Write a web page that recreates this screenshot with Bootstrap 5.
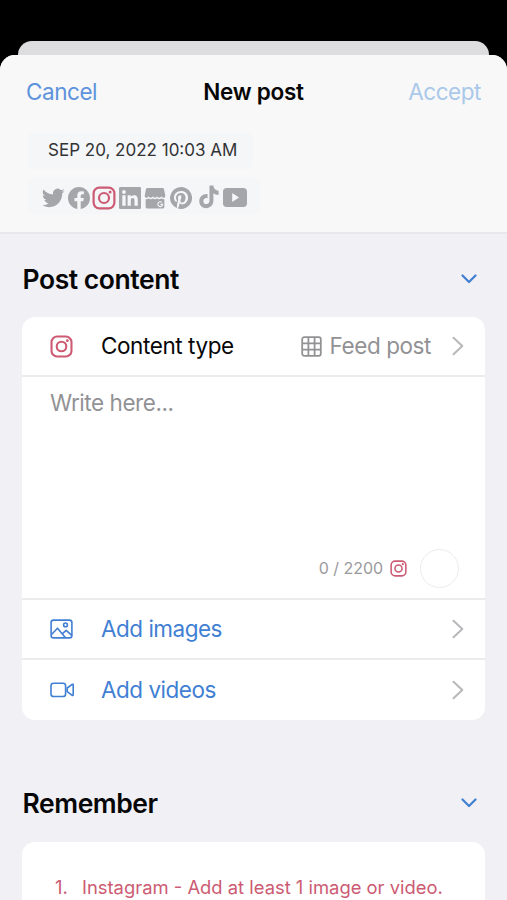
<!DOCTYPE html>
<html lang="en">
<head>
<meta charset="utf-8">
<meta name="viewport" content="width=device-width, initial-scale=1">
<title>New post</title>
<link rel="stylesheet" href="https://cdn.jsdelivr.net/npm/bootstrap@5.3.0/dist/css/bootstrap.min.css">
<style>
  body { font-family: Inter, "Liberation Sans", sans-serif; background: #000; height: 900px; color: #070708; }
  svg { display: block; flex: none; }
  .sheet-back { height: 14px; margin: 41px 18px 0; background: #dddde0; border-radius: 14px 14px 0 0; }
  .sheet { height: 845px; background: #f0f0f5; border-radius: 15px 15px 0 0; }
  .sheet-head { height: 179px; background: #f8f8f8; border-bottom: 2px solid #e8e8eb; }
  .bar { height: 74px; padding: 0 26px; display: grid; grid-template-columns: 1fr auto 1fr; }
  .bar-btn { font-size: 22.5px; line-height: 26px; letter-spacing: -.45px; color: #5d93dc; }
  .bar-btn.dim { color: #a9c8ea; }
  .bar-title { font-size: 22.5px; line-height: 26px; font-weight: 600; letter-spacing: -.25px; }
  .pill { background: #f5f6f8; border-radius: 5px; margin-left: 28px; width: max-content; }
  .date-pill { height: 36px; padding: 0 16px 0 20px; font-size: 17px; letter-spacing: 0; color: #333336; }
  .net-pill { height: 37px; padding: 0 13px; gap: 2.6px; color: #a5a6aa; }
  .tiktok { margin: -1px 1.5px 0 4px; }
  .pink { color: #cc5b73; }
  .sec-head { padding: 0 30px 0 22.5px; height: 34px; }
  .sec-head h2 { font-size: 26.5px; line-height: 34px; font-weight: 600; letter-spacing: -.45px; }
  .panel { margin: 0 22px; background: #fff; border-radius: 13px; overflow: hidden; }
  .post-panel { margin-top: 25px; }
  .rule { border-bottom: 2px solid #ebebee; }
  .line-item { height: 60.5px; padding: 0 21px 0 27.500px; font-size: 22.5px; letter-spacing: -.5px; }
  .line-item > .lead-icon { width: 51.500px; }
  .first-item { height: 60px; letter-spacing: -.42px; }
  .last-item { height: 60px; padding-bottom: 1px; }
  .blue { color: #417fd3; }
  .muted { color: #929295; }
  .chev { color: #b9b9bc; }
  .value-chev { margin-left: 21px; }
  .editor { height: 222.500px; padding: 9px 26px 10px 28px; font-size: 22.5px; letter-spacing: -.45px; }
  .count { font-size: 16px; letter-spacing: -.05px; color: #9a9a9d; }
  .count-icon { margin-left: 7px; }
  .ring { width: 39px; height: 39px; border: 1.5px solid #ececec; border-radius: 50%; margin-left: 13px; }
  .remember { margin-top: 66px; }
  .remember .panel { margin-top: 22px; }
  .note { padding: 33px 0 0 33px; height: 80px; font-size: 18.4px; line-height: 24px; }
  .note .num { width: 27px; }
</style>
<script src="https://cdn.jsdelivr.net/npm/bootstrap@5.3.0/dist/js/bootstrap.bundle.min.js"></script>
</head>
<body class="overflow-hidden m-0">
<svg width="0" height="0" class="position-absolute" aria-hidden="true">
  <symbol id="insta" viewBox="0 0 24 24"><rect x="1.600" y="1.600" width="20.800" height="20.800" rx="5.800" fill="none" stroke="currentColor" stroke-width="2.200"/><circle cx="12" cy="12" r="5" fill="none" stroke="currentColor" stroke-width="2.200"/><circle cx="18.100" cy="5.900" r="1.500" fill="currentColor"/></symbol>
  <symbol id="right" viewBox="0 0 12 20"><path d="M1.500 1.800 10.300 10l-8.800 8.200" fill="none" stroke="currentColor" stroke-width="2.100" stroke-linecap="round" stroke-linejoin="round"/></symbol>
  <symbol id="down" viewBox="0 0 16 10"><path d="M1.500 1.500 8 8l6.500-6.500" fill="none" stroke="currentColor" stroke-width="2.200" stroke-linecap="round" stroke-linejoin="round"/></symbol>
</svg>
<div class="d-flex flex-column">
<div class="sheet-back"></div>
<main class="sheet overflow-hidden">
  <header class="sheet-head">
    <div class="bar align-items-center">
      <span class="bar-btn">Cancel</span>
      <span class="bar-title">New post</span>
      <span class="bar-btn dim text-end">Accept</span>
    </div>
    <div class="pill date-pill d-flex align-items-center mt-1">SEP 20, 2022 10:03 AM</div>
    <div class="pill net-pill d-flex align-items-center mt-2 pt-1">
      <svg width="24" height="24" viewBox="0 0 24 24" fill="currentColor"><path d="M23.600 4.900c-.8.400-1.700.7-2.600.8.900-.6 1.700-1.500 2-2.600-.9.500-1.900.9-2.900 1.100a4.700 4.700 0 0 0-8 4.300C8.200 8.300 4.800 6.500 2.500 3.600a4.700 4.700 0 0 0 1.400 6.200c-.8 0-1.500-.2-2.100-.6 0 2.300 1.600 4.200 3.700 4.700-.7.200-1.400.2-2.100.1.600 1.800 2.300 3.200 4.300 3.200A9.400 9.400 0 0 1 .8 19.100 13.200 13.200 0 0 0 8 21.200c8.700 0 13.500-7.300 13.200-13.900 1-.6 1.800-1.500 2.400-2.400z"/></svg>
      <svg width="22" height="22" viewBox="0 0 24 24" fill="currentColor"><path d="M24 12.070C24 5.400 18.630 0 12 0S0 5.400 0 12.070C0 18.100 4.390 23.090 10.130 24v-8.440H7.080v-3.490h3.050V9.410c0-3.020 1.790-4.690 4.530-4.690 1.310 0 2.680.24 2.680.24v2.970h-1.510c-1.490 0-1.960.93-1.960 1.890v2.250h3.330l-.53 3.490h-2.800V24C19.610 23.090 24 18.100 24 12.070z"/></svg>
      <svg class="pink" width="24" height="24"><use href="#insta"/></svg>
      <svg width="22" height="22" viewBox="0 0 24 24" fill="currentColor"><path fill-rule="evenodd" d="M1.500 0h21A1.500 1.500 0 0 1 24 1.500v21a1.500 1.500 0 0 1-1.500 1.500h-21A1.500 1.500 0 0 1 0 22.500v-21A1.500 1.500 0 0 1 1.500 0zm2.100 9.100v11.400h3.600V9.100zM5.400 3.400a2.050 2.050 0 1 0 0 4.100 2.050 2.050 0 0 0 0-4.100zM9.400 9.100v11.400h3.500v-5.600c0-1.500.3-2.900 2.100-2.900s1.900 1.700 1.900 3v5.500h3.600v-6.200c0-3.100-.7-5.400-4.300-5.400-1.700 0-2.900.9-3.300 1.800V9.100z"/></svg>
      <svg width="24" height="22" viewBox="0 0 24 23" fill="currentColor"><path d="M4 1h16a1.500 1.500 0 0 1 1.400 1.100l1.400 7c0 1.300-.9 2.200-2 2.200s-2-.8-2.200-1.800c-.2 1-1.100 1.800-2.200 1.800S14.300 10.500 14 9.500c-.2 1-1 1.800-2 1.800s-1.900-.8-2.100-1.800c-.3 1-1.200 1.800-2.300 1.800S5.600 10.500 5.400 9.500c-.2 1-1.100 1.800-2.200 1.800-1.100 0-2-.9-2-2.200l1.400-7A1.500 1.500 0 0 1 4 1z"/><path d="M2.200 12.700c1.300.2 2.400-.2 3.200-.9 1.200 1.200 3.200 1.200 4.500 0 1.200 1.200 3 1.200 4.200 0 1.300 1.200 3.300 1.200 4.500 0 .8.700 1.900 1.100 3.200.9V21a1.400 1.400 0 0 1-1.400 1.400H3.600A1.400 1.400 0 0 1 2.200 21z"/><path d="M19.200 16.100a2.500 2.500 0 1 0 .8 2.100h-2.300" fill="none" stroke="#f5f6f8" stroke-width="1.200"/></svg>
      <svg width="22" height="22" viewBox="0 0 24 24" fill="currentColor"><path d="M12 0a12 12 0 0 0-4.370 23.170c-.1-.95-.2-2.400.04-3.440.22-.94 1.410-5.960 1.410-5.960s-.36-.72-.36-1.780c0-1.670.97-2.920 2.170-2.920 1.020 0 1.520.77 1.520 1.690 0 1.030-.66 2.570-1 4-.28 1.200.6 2.170 1.780 2.170 2.140 0 3.780-2.250 3.780-5.500 0-2.870-2.060-4.880-5.010-4.880-3.410 0-5.410 2.560-5.410 5.200 0 1.030.4 2.140.89 2.740.1.120.11.220.08.340l-.33 1.360c-.05.220-.17.270-.4.160-1.500-.7-2.430-2.890-2.430-4.650 0-3.780 2.750-7.260 7.920-7.260 4.160 0 7.390 2.970 7.390 6.930 0 4.130-2.610 7.460-6.220 7.460-1.210 0-2.350-.63-2.750-1.380l-.75 2.850c-.27 1.040-1 2.350-1.490 3.150A12 12 0 1 0 12 0z"/></svg>
      <svg class="tiktok" width="20" height="24" viewBox="0 0 21 25" preserveAspectRatio="none" fill="currentColor"><path d="M11 .5h4.100c.2 3 2.300 5.300 5.500 5.600v4.200c-2 .1-3.900-.6-5.500-1.700v7.900c0 4.400-3.400 7.600-7.400 7.600C3.300 24.100.3 20.900.3 16.800c0-4.600 4-8 8.700-7.400v4.400c-2.200-.7-4.400.7-4.400 3 0 1.800 1.400 3.100 3.100 3.100 1.900 0 3.300-1.300 3.300-3.400z"/></svg>
      <svg width="24" height="19" viewBox="0 0 24 19"><rect width="24" height="19" rx="3.800" fill="currentColor"/><path d="M9.200 5.100v8.800l6.800-4.400z" fill="#f5f6f8"/></svg>
    </div>
  </header>

  <section>
    <div class="sec-head d-flex justify-content-between align-items-center mt-4 pt-2">
      <h2 class="m-0">Post content</h2>
      <svg class="blue" width="16" height="10"><use href="#down"/></svg>
    </div>
    <div class="panel post-panel">
      <div class="line-item first-item rule d-flex align-items-center">
        <span class="lead-icon"><svg class="pink" width="23" height="23"><use href="#insta"/></svg></span>
        <span class="flex-grow-1">Content type</span>
        <span class="muted d-flex align-items-center gap-2">
          <svg width="21" height="21" viewBox="0 0 21 21" fill="none" stroke="currentColor" stroke-width="1.800"><rect x="1.200" y="1.200" width="18.600" height="18.600" rx="2"/><path d="M7.400 1v19M13.600 1v19M1 7.400h19M1 13.600h19"/></svg>
          <span>Feed post</span>
        </span>
        <svg class="chev value-chev" width="12" height="20"><use href="#right"/></svg>
      </div>
      <div class="editor rule d-flex flex-column justify-content-between">
        <span class="muted">Write here...</span>
        <div class="d-flex align-items-center justify-content-end">
          <span class="count">0 / 2200</span>
          <svg class="pink count-icon" width="17" height="17"><use href="#insta"/></svg>
          <span class="ring"></span>
        </div>
      </div>
      <div class="line-item rule d-flex align-items-center">
        <span class="lead-icon"><svg class="blue" width="23" height="20" viewBox="0 0 23 20" fill="none" stroke="currentColor" stroke-width="1.600" stroke-linejoin="round"><rect x="1.100" y="1.100" width="20.800" height="17.800" rx="2.500"/><circle cx="15.500" cy="5.900" r="1.900"/><path d="m1.500 15.500 6-6.300 7.800 9.400M12.200 14.900l4-3.600 5.500 5"/></svg></span>
        <span class="blue flex-grow-1">Add images</span>
        <svg class="chev" width="12" height="20"><use href="#right"/></svg>
      </div>
      <div class="line-item last-item d-flex align-items-center">
        <span class="lead-icon"><svg class="blue" width="24" height="16" viewBox="0 0 24 16" fill="none" stroke="currentColor" stroke-width="1.600" stroke-linejoin="round"><rect x="1" y="1.200" width="14.600" height="13.300" rx="2.600"/><path d="m17.200 6 5-3.700q1-.4 1 .7v9.700q0 1.100-1 .7l-5-3.700z"/></svg></span>
        <span class="blue flex-grow-1">Add videos</span>
        <svg class="chev" width="12" height="20"><use href="#right"/></svg>
      </div>
    </div>
  </section>

  <section class="remember">
    <div class="sec-head d-flex justify-content-between align-items-center">
      <h2 class="m-0">Remember</h2>
      <svg class="blue" width="16" height="10"><use href="#down"/></svg>
    </div>
    <div class="panel">
      <div class="note pink d-flex"><span class="num">1.</span><span>Instagram - Add at least 1 image or video.</span></div>
    </div>
  </section>
</main>
</div>
</body>
</html>
